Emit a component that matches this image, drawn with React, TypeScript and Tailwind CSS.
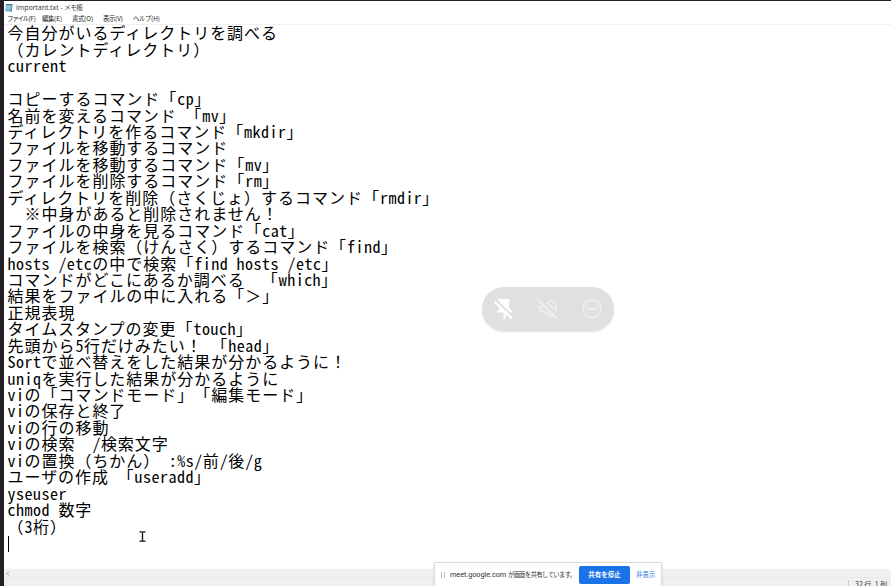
const lines = [
  '今自分がいるディレクトリを調べる',
  '（カレントディレクトリ）',
  'current',
  '',
  'コピーするコマンド「cp」',
  '名前を変えるコマンド 「mv」',
  'ディレクトリを作るコマンド「mkdir」',
  'ファイルを移動するコマンド',
  'ファイルを移動するコマンド「mv」',
  'ファイルを削除するコマンド「rm」',
  'ディレクトリを削除（さくじょ）するコマンド「rmdir」',
  '　※中身があると削除されません！',
  'ファイルの中身を見るコマンド「cat」',
  'ファイルを検索（けんさく）するコマンド「find」',
  'hosts /etcの中で検索「find hosts /etc」',
  'コマンドがどこにあるか調べる　「which」',
  '結果をファイルの中に入れる「＞」',
  '正規表現',
  'タイムスタンプの変更「touch」',
  '先頭から5行だけみたい！ 「head」',
  'Sortで並べ替えをした結果が分かるように！',
  'uniqを実行した結果が分かるように',
  'viの「コマンドモード」「編集モード」',
  'viの保存と終了',
  'viの行の移動',
  'viの検索　/検索文字',
  'viの置換（ちかん） :%s/前/後/g',
  'ユーザの作成 「useradd」',
  'yseuser',
  'chmod 数字',
  '（3桁）',
];

const menus = [
  { name: 'ファイル', shortcut: '(F)', width: 'w-[35px]' },
  { name: '編集', shortcut: '(E)', width: 'w-[30px]' },
  { name: '書式', shortcut: '(O)', width: 'w-[31px]' },
  { name: '表示', shortcut: '(V)', width: 'w-[30px]' },
  { name: 'ヘルプ', shortcut: '(H)', width: 'w-[34px]' },
];

// Latin runs take half-width glyphs; Japanese runs keep the full cell.
function Line({ text }: { text: string }) {
  const runs = text.match(/[ -~]+|[^ -~]+/g) ?? [];
  return (
    <div className="h-[16.45px] whitespace-pre">
      {runs.map((run, i) =>
        /^[ -~]/.test(run) ? (
          <span key={i} className="tracking-[0.48px] [font-feature-settings:'hwid','liga'_0]">{run}</span>
        ) : (
          <span key={i} className="tracking-[0.98px] [font-feature-settings:'fwid','palt'_0,'chws'_0] [text-spacing-trim:space-all]">{run}</span>
        ),
      )}
    </div>
  );
}

function TitleBar() {
  return (
    <div className="flex h-[13px] shrink-0 items-center pl-px">
      <svg className="h-[9px] w-[8px]" viewBox="0 0 8 9">
        <path d="M1 1h6.5l-.7 7.5H.2z" fill="#78b9d1" />
        <path d="M1 1h6.5v1.2H.8z" fill="#587b88" />
        <path d="M1.5 3.5h4M1.3 5h4" stroke="#b9e2ef" strokeWidth=".7" />
        <path d="M7 2v6.5H5z" fill="#4c91ab" />
      </svg>
      <span className="ml-[3px] text-[6.6px] leading-none tracking-[-0.7px] whitespace-nowrap text-[#333]">
        <span className="font-['Open_Sans'] text-[7px] tracking-[-0.05px]">important.txt - </span>メモ帳
      </span>
    </div>
  );
}

function MeetControls() {
  return (
    <div className="absolute top-[286px] left-[478px] flex h-11 w-[132px] items-center justify-between rounded-full bg-[#dee1e0] px-[10px] shadow-[0_1px_2px_rgba(0,0,0,0.12)]">
      <svg className="size-6" viewBox="0 0 24 24">
        <path d="M6 2h12v2h-1v7l3 3v1.5h-6.5V22h-2v-6.5H5V14l3-3V4H6z" fill="#fff" />
        <path d="M4 3 22 20.5" stroke="#dee1e0" strokeWidth="2" />
        <path d="M2.5 4.5 20 21.5" stroke="#fff" strokeWidth="2.2" />
      </svg>
      <svg className="size-6" viewBox="0 0 24 24" fill="none" stroke="#ebedec" strokeWidth="2">
        <path d="M4 9.5h4l4-4v13l-4-4H4zM14 3.8c8.5 2 8.5 14.4 0 16.4M14 8c4 2 4 6 0 8" />
        <path d="M4 2 22 20" stroke="#dee1e0" />
        <path d="M2.5 3 21 21.5" strokeWidth="2.4" />
      </svg>
      <svg className="size-6" viewBox="0 0 24 24" fill="none" stroke="#ebedec" strokeWidth="2">
        <circle cx="12" cy="12" r="9" />
        <path d="M7 12h10" />
      </svg>
    </div>
  );
}

function SharingBar() {
  return (
    <div className="absolute top-[561px] left-[430px] flex h-[26px] w-[228px] items-center border border-[#dcdcdc] bg-white text-[6.3px] whitespace-nowrap shadow-sm">
      <div className="ml-[6px] flex shrink-0 gap-[2px]">
        <i className="h-[6px] w-px bg-[#bbb]" />
        <i className="h-[6px] w-px bg-[#bbb]" />
      </div>
      <span className="ml-[5px] w-[129px] shrink-0 tracking-[-0.6px] text-[#333]">
        <span className="font-[Roboto] text-[7.3px] tracking-[-0.05px]">meet.google.com </span>が画面を共有しています。
      </span>
      <button className="h-[18px] w-[51px] shrink-0 rounded-[2px] bg-[#1a73e8] text-[6.5px] font-bold text-white">共有を停止</button>
      <span className="ml-[6px] text-[6.5px] text-[#3479dd]">非表示</span>
    </div>
  );
}

export default function App() {
  return (
    <div className="relative flex h-[586px] w-[891px] flex-col overflow-hidden border-t border-l-4 border-[#231f24] bg-white font-['Noto_Sans_CJK_JP',sans-serif]">
      <TitleBar />
      <div className="flex h-[11px] shrink-0 items-center border-b border-[#f0f0f0] pt-px pl-[3px] text-[6.4px] leading-none tracking-[-0.4px] whitespace-nowrap text-[#222]">
        {menus.map((m) => (
          <span key={m.name} className={`${m.width} shrink-0`}>
            <span className={m.name === 'ファイル' ? 'tracking-[-1.1px]' : ''}>{m.name}</span>
            <span className="tracking-[0px]">{m.shortcut}</span>
          </span>
        ))}
      </div>
      <main className="-mt-[0.6px] min-h-0 flex-1 overflow-hidden pl-[3.5px] text-[16px] leading-[16.45px] text-black">
        {lines.map((line, i) => (
          <Line key={i} text={line} />
        ))}
        <div className="mt-[2px] h-4 w-px bg-black" />
      </main>
      <div className="h-[9px] shrink-0 border-b border-[#e8e8e8] bg-[#f0f0f0] pl-[2px]">
        <svg className="mt-[2px] h-[5px] w-[4px]" viewBox="0 0 4 5" fill="none" stroke="#999"><path d="M3 .5 1 2.5l2 2" /></svg>
      </div>
      <div className="flex h-[8px] shrink-0 justify-end overflow-hidden bg-[#f0f0f0]">
        <div className="mt-[2px] w-[43px] border-l border-[#d0d0d0] pl-[6px] text-[7px] leading-[8px] whitespace-nowrap text-[#333]">32 行, 1 列</div>
      </div>
      <MeetControls />
      <SharingBar />
      <svg className="absolute top-[530px] left-[135px] h-[11px] w-[7px]" viewBox="0 0 7 11" fill="none" stroke="#111" strokeWidth="1.3">
        <path d="M.5.8h2.2l.8.6.8-.6h2.2M3.5 1.2v8.6M.5 10.2h2.2l.8-.6.8.6h2.2" />
      </svg>
    </div>
  );
}
